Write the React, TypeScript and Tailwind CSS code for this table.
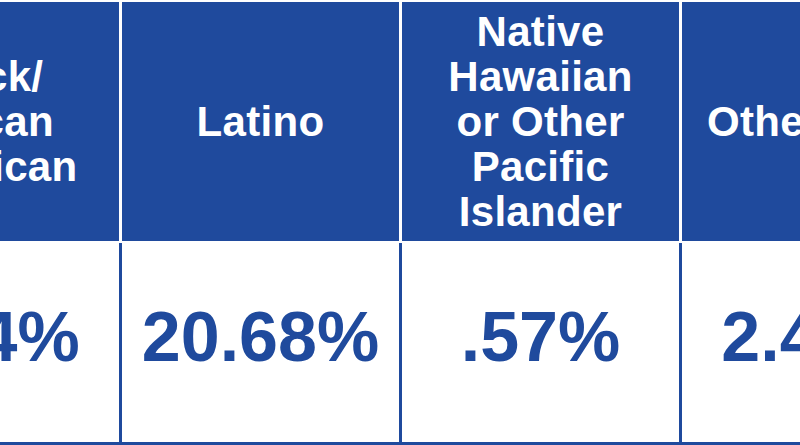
const columns = [
  { label: ['Black/', 'African', 'American'], value: '7.24%' },
  { label: ['Latino'], value: '20.68%' },
  { label: ['Native', 'Hawaiian', 'or Other', 'Pacific', 'Islander'], value: '.57%' },
  { label: ['Other Race'], value: '2.41%' },
];

export default function App() {
  return (
    <div
      className="w-[800px] h-[445px] overflow-hidden bg-white"
      style={{ fontFamily: '"Liberation Sans", Arial, sans-serif' }}
    >
      <div className="ml-[-158px] w-[1118px] pt-[2px]">
        {/* header row */}
        <div className="flex gap-[3px] h-[239px]">
          {columns.map((col) => (
            <div
              key={col.value}
              className="w-[277px] shrink-0 bg-[#1f4a9d] flex flex-col items-center justify-center text-white font-bold text-[42px] leading-[45px] text-center tracking-[0.3px]"
            >
              {col.label.map((line) => (
                <span key={line} className="whitespace-nowrap">{line}</span>
              ))}
            </div>
          ))}
        </div>

        {/* values row */}
        <div className="mt-[2px] flex gap-[3px] bg-[#1f4a9d] pb-[3px]">
          {columns.map((col) => (
            <div
              key={col.value}
              className="w-[277px] shrink-0 h-[199px] bg-white flex items-center justify-center text-[#1f4a9d] font-bold text-[70px] leading-none"
            >
              <span className="-mt-[12px]">{col.value}</span>
            </div>
          ))}
        </div>
      </div>
    </div>
  );
}
